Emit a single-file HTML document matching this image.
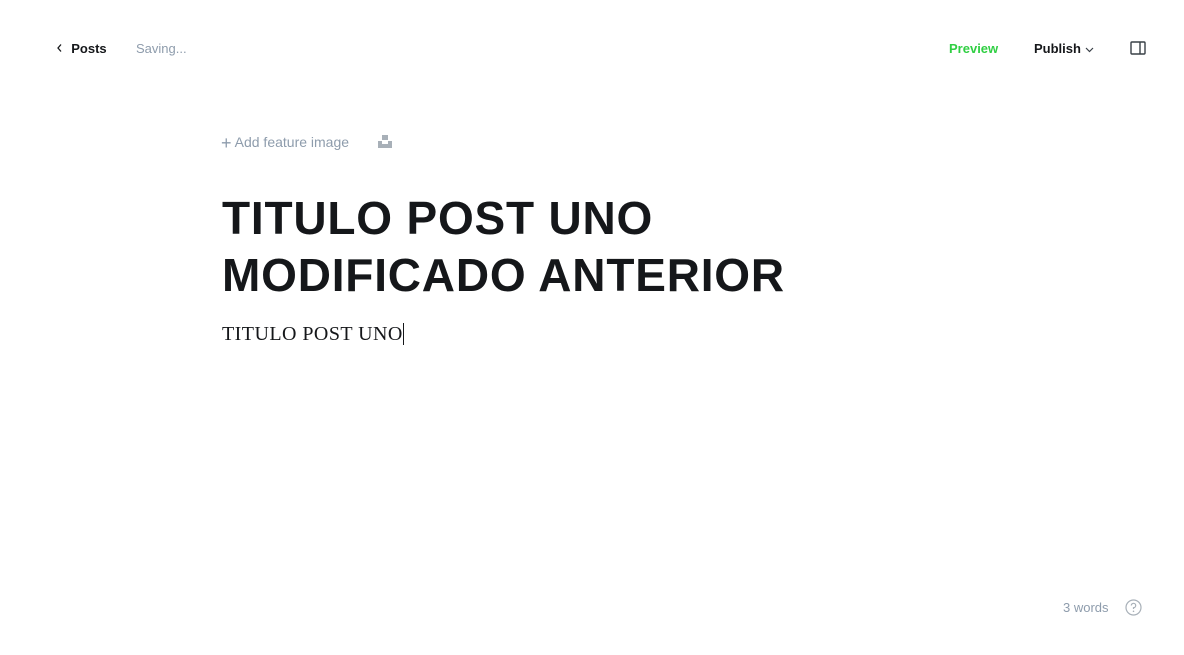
<!DOCTYPE html>
<html><head><meta charset="utf-8"><style>
body{margin:0;width:1184px;height:655px;background:#fff;font-family:"Liberation Sans",sans-serif;position:relative;overflow:hidden}
.a{position:absolute;white-space:nowrap}
</style></head><body>
<div class="a" style="left:56px;top:41px;font-size:13px;color:#15171a;font-weight:bold">
<svg width="8" height="10" style="vertical-align:0" viewBox="0 0 8 10"><path d="M5 1.5 L2 5 L5 8.5" fill="none" stroke="#15171a" stroke-width="1.3"/></svg>&nbsp;&nbsp;Posts</div>
<div class="a" style="left:136px;top:41px;font-size:13px;color:#8e9cac">Saving...</div>
<div class="a" style="left:949px;top:41px;font-size:13px;color:#30cf43;font-weight:bold">Preview</div>
<div class="a" style="left:1034px;top:41px;font-size:13px;color:#15171a;font-weight:bold">Publish <svg width="9" height="6" viewBox="0 0 9 6"><path d="M1 1 L4.5 4.5 L8 1" fill="none" stroke="#394047" stroke-width="1.2"/></svg></div>
<svg class="a" style="left:1130px;top:41px" width="16" height="14" viewBox="0 0 16 14"><rect x="1" y="1" width="14" height="12" rx="1" fill="none" stroke="#394047" stroke-width="1.4"/><line x1="10" y1="1" x2="10" y2="13" stroke="#394047" stroke-width="1.4"/></svg>
<div class="a" style="left:221px;top:133px;font-size:14px;color:#8e9cac"><span style="font-size:18px;vertical-align:-2px">+</span> Add feature image</div>
<svg class="a" style="left:378px;top:135px" width="14" height="13" viewBox="0 0 14 13"><rect x="4" y="0" width="6" height="5" fill="#a8b0b8"/><path d="M0 6 H4 V9 H10 V6 H14 V13 H0Z" fill="#a8b0b8"/></svg>
<div class="a" style="left:222px;top:190px;font-size:46px;line-height:57px;font-weight:bold;color:#15171a;letter-spacing:0.8px">TITULO POST UNO<br>MODIFICADO ANTERIOR</div>
<div class="a" style="left:222px;top:323px;font-family:'Liberation Serif',serif;font-size:20px;color:#15171a;letter-spacing:0.45px">TITULO POST UNO<span style="border-left:1px solid #15171a;margin-left:0"></span></div>
<div class="a" style="left:1063px;top:600px;font-size:13px;color:#8e9cac">3 words</div>
<svg class="a" style="left:1125px;top:599px" width="17" height="17" viewBox="0 0 17 17"><circle cx="8.5" cy="8.5" r="7.5" fill="none" stroke="#a8b0b8" stroke-width="1.2"/><path d="M6.3 6.5 A2.2 2.2 0 1 1 8.5 8.7 V10" fill="none" stroke="#a8b0b8" stroke-width="1.2"/><circle cx="8.5" cy="12.3" r=".8" fill="#a8b0b8"/></svg>
</body></html>
